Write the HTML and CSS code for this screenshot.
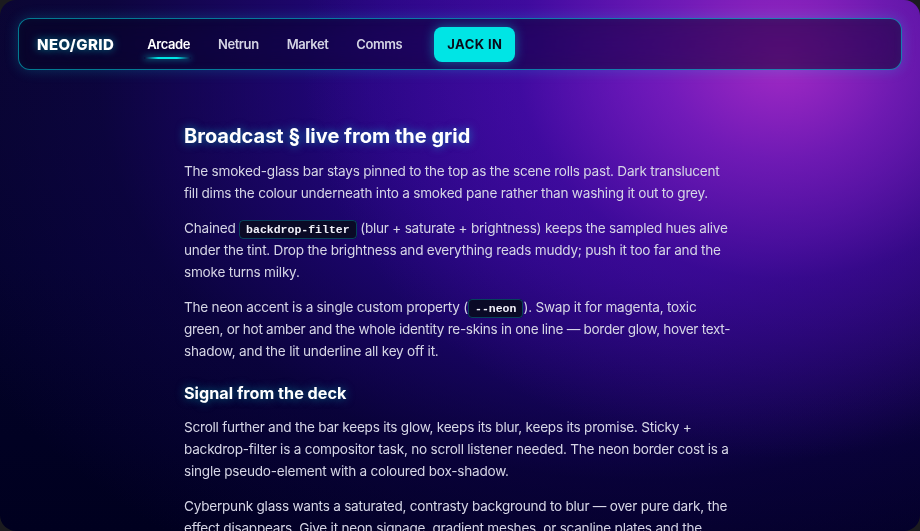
FILE: index.html
```html
<!DOCTYPE html>
<html lang="en">
<head>
<meta charset="utf-8">
<title>NEO/GRID</title>
<link rel="stylesheet" href="styles.css">
</head>
<body>
<div class="window">
  <header class="bar">
    <div class="logo">NEO/GRID</div>
    <nav class="links">
      <a class="link active" href="#">Arcade</a>
      <a class="link" href="#">Netrun</a>
      <a class="link" href="#">Market</a>
      <a class="link" href="#">Comms</a>
    </nav>
    <button class="cta">JACK IN</button>
  </header>
  <main class="content">
    <h1 class="title">Broadcast § live from the grid</h1>
    <p>The smoked-glass bar stays pinned to the top as the scene rolls past. Dark translucent fill dims the colour underneath into a smoked pane rather than washing it out to grey.</p>
    <p>Chained <code>backdrop-filter</code> (blur + saturate + brightness) keeps the sampled hues alive under the tint. Drop the brightness and everything reads muddy; push it too far and the smoke turns milky.</p>
    <p>The neon accent is a single custom property (<code>--neon</code>). Swap it for magenta, toxic <span class="tight">green, or hot amber and the whole identity re-skins in one line — border glow, hover text-</span>shadow, and the lit underline all key off it.</p>
    <h2 class="sub">Signal from the deck</h2>
    <p>Scroll further and the bar keeps its glow, keeps its blur, keeps its promise. Sticky + backdrop-filter is a compositor task, no scroll listener needed. The neon border cost is a single pseudo-element with a coloured box-shadow.</p>
    <p>Cyberpunk glass wants a saturated, contrasty background to blur — over pure dark, the effect disappears. Give it neon signage, gradient meshes, or scanline plates and the smoke finally has something to chew on.</p>
  </main>
</div>
</body>
</html>
```

FILE: styles.css
```css
html, body {
  margin: 0;
  padding: 0;
  background: #1b1b1f;
}

body {
  width: 920px;
  height: 531px;
  overflow: hidden;
  font-family: Inter, "Noto Sans", sans-serif;
}

.window {
  height: 531px;
  border-radius: 16px;
  overflow: hidden;
  box-sizing: border-box;
  padding: 18px 18px 0;
  background:
    radial-gradient(ellipse 480px 400px at 85% 11%, rgba(170, 44, 200, 0.95) 0%, rgba(140, 34, 196, 0.7) 25%, rgba(90, 16, 176, 0.4) 55%, rgba(50, 8, 150, 0) 100%),
    radial-gradient(ellipse 780px 580px at 70% 14%, rgba(56, 8, 168, 1) 0%, rgba(44, 6, 150, 0.8) 35%, rgba(24, 4, 100, 0.35) 70%, rgba(10, 4, 60, 0) 100%),
    linear-gradient(180deg, #070628 0%, #03032a 50%, #00001f 100%);
}

.bar {
  display: flex;
  align-items: center;
  height: 52px;
  box-sizing: border-box;
  padding: 0 18px;
  border: 1px solid rgba(0, 220, 230, 0.55);
  border-radius: 12px;
  background: rgba(8, 6, 30, 0.55);
  backdrop-filter: blur(12px) saturate(1.4) brightness(0.9);
  box-shadow: 0 0 14px rgba(0, 220, 230, 0.22), inset 0 0 10px rgba(0, 220, 230, 0.05);
}

.logo {
  color: #ffffff;
  font-weight: 800;
  font-size: 15px;
  letter-spacing: 0.4px;
  text-shadow: 0 0 8px rgba(0, 229, 229, 0.6);
}

.links {
  display: flex;
  gap: 28px;
  margin-left: 33px;
}

.link {
  position: relative;
  color: #d4d4e4;
  font-size: 13px;
  font-weight: 600;
  letter-spacing: -0.42px;
  text-decoration: none;
}

.link.active {
  color: #ffffff;
}

.link.active::after {
  content: "";
  position: absolute;
  left: -3px;
  right: -1px;
  bottom: -7px;
  height: 2px;
  border-radius: 2px;
  background: linear-gradient(90deg, rgba(0, 229, 229, 0), #00e5e5 30%, #00e5e5 70%, rgba(0, 229, 229, 0));
  box-shadow: 0 0 6px rgba(0, 229, 229, 0.8);
}

.cta {
  margin-left: 32px;
  height: 35px;
  width: 81px;
  border: none;
  border-radius: 8px;
  background: #00e5e5;
  color: #0a0a1a;
  font-family: Inter, "Noto Sans", sans-serif;
  font-size: 13px;
  font-weight: 700;
  letter-spacing: 0.4px;
  box-shadow: 0 0 12px rgba(0, 229, 229, 0.45);
}

.content {
  width: 552px;
  margin: 0 auto;
  padding-top: 53px;
  color: #d6d6e6;
  font-size: 13.6px;
  letter-spacing: -0.24px;
  line-height: 21.8px;
}

.tight {
  letter-spacing: -0.31px;
}

.title {
  margin: 0 0 12px;
  color: #ffffff;
  font-size: 20px;
  font-weight: 700;
  letter-spacing: 0;
  line-height: 26px;
  text-shadow: 0 0 10px rgba(0, 229, 229, 0.55);
}

.sub {
  margin: 19px 0 12px;
  color: #ffffff;
  font-size: 16.2px;
  font-weight: 700;
  letter-spacing: 0;
  line-height: 24px;
  text-shadow: 0 0 10px rgba(0, 229, 229, 0.5);
}

.content p {
  margin: 0 0 13.5px;
}

code {
  font-family: "Liberation Mono", "DejaVu Sans Mono", monospace;
  font-size: 11.5px;
  font-weight: 700;
  letter-spacing: 0;
  line-height: 1;
  color: #f0f0f8;
  background: #0a0a26;
  border: 1px solid rgba(0, 200, 220, 0.3);
  border-radius: 4px;
  padding: 2px 6px;
}
```
